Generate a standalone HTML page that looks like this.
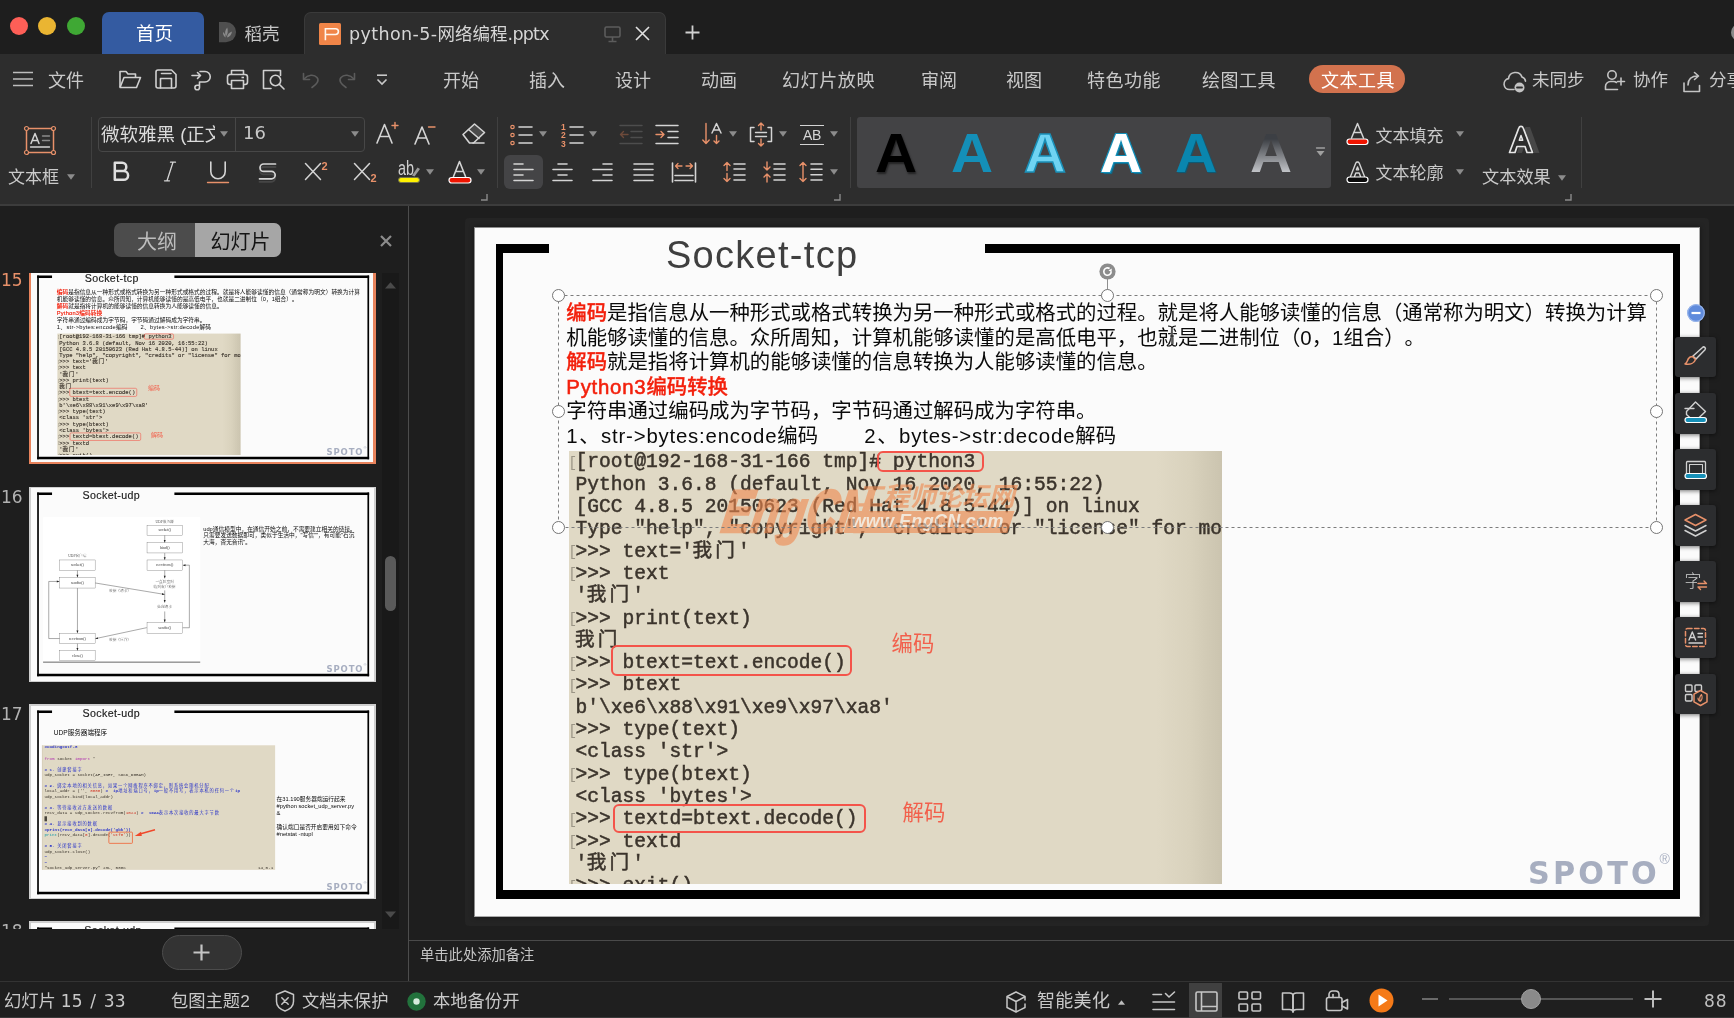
<!DOCTYPE html>
<html lang="zh-CN">
<head>
<meta charset="utf-8">
<title>python-5-网络编程.pptx</title>
<style>
*{box-sizing:border-box;margin:0;padding:0}
html,body{width:1734px;height:1018px;overflow:hidden;background:#1e1e1e}
body{position:relative;font-family:"Liberation Sans","Noto Sans CJK SC",sans-serif;color:#c9c9c9;font-size:18px;line-height:1}
.abs{position:absolute}
body>div{will-change:transform}
.t{position:absolute;white-space:nowrap;line-height:1}
svg{position:absolute;overflow:visible}
#titlebar{position:absolute;left:0;top:0;width:1734px;height:54px;background:#1e1e1e}
#menubar{position:absolute;left:0;top:54px;width:1734px;height:51px;background:#2d2d2d}
#ribbon{position:absolute;left:0;top:105px;width:1734px;height:99px;background:#2d2d2d}
#ribbonline{position:absolute;left:0;top:204px;width:1734px;height:2px;background:#3c3c3c}
#leftpanel{position:absolute;left:0;top:206px;width:408px;height:775px;background:#1e1e1e;overflow:hidden}
#vsplit{position:absolute;left:408px;top:206px;width:1px;height:775px;background:#4c4c4c}
#main{position:absolute;left:409px;top:206px;width:1325px;height:734px;background:#1e1e1e;overflow:hidden}
#notes{position:absolute;left:409px;top:939.500px;width:1325px;height:42px;background:#1e1e1e;border-top:1.300px solid #4a4a4a}
#status{position:absolute;left:0;top:981px;width:1734px;height:37px;background:#1f1f1f;border-top:1px solid #333;border-bottom:1.500px solid #3a3a3a}
.slide{position:absolute;width:1225px;height:689px;background:#fbfbfb;overflow:hidden;font-family:"Liberation Sans","Noto Sans CJK SC",sans-serif}
.code{font-family:"Liberation Mono","Noto Sans CJK SC",monospace;font-size:19.600px;line-height:22px;color:#3b342c;-webkit-text-stroke:.5px #3b342c;white-space:pre}
.th .ttl{color:#1c1c1c!important;-webkit-text-stroke:.6px #1c1c1c}
.th .body{transform:translateY(-10px)}
</style>
</head>
<body>
<div id="titlebar"><div class="abs" style="left:10px;top:17px;width:18px;height:18px;border-radius:50%;background:#fe5f57"></div>
<div class="abs" style="left:38px;top:17px;width:18px;height:18px;border-radius:50%;background:#eab532"></div>
<div class="abs" style="left:67px;top:17px;width:18px;height:18px;border-radius:50%;background:#3fa834"></div>
<div class="abs" style="left:102px;top:12px;width:102px;height:42px;border-radius:7px 7px 0 0;background:#345ba1"></div>
<div class="t" style="left:136px;top:25px;font-size:18.500px;color:#fff">首页</div>
<svg style="left:218.800px;top:22px" width="18" height="21" viewBox="0 0 18 21"><path d="M0 0H7A10 10 0 0 1 7 20.200H0Z" fill="#4f4f4f"/><path d="M8.200 5.500C5.800 8.500 5.500 11.500 7 14.500C9 11.500 9.200 8.500 8.200 5.500Z" fill="#8c8c8c"/><path d="M13 9.500C10 10.500 8.200 12.500 8 15.500C10.800 14.800 12.500 12.800 13 9.500Z" fill="#8c8c8c"/><path d="M4 10C3.800 12.500 4.800 14.500 6.600 15.500C6.500 13 5.600 11.300 4 10Z" fill="#8c8c8c"/></svg>
<div class="t" style="left:244.500px;top:25.700px;font-size:17.500px;color:#c6c6c6">稻壳</div>
<div class="abs" style="left:304px;top:12px;width:362px;height:42px;border-radius:7px 7px 0 0;background:#2d2d2d;border:1px solid #3a3a3a;border-bottom:none"></div>
<div class="abs" style="left:319.400px;top:23.200px;width:22px;height:22px;border-radius:1.500px;background:#f08548"></div>
<svg style="left:319.400px;top:23.200px" width="22" height="22" viewBox="0 0 22 22"><path d="M6.400 17.300V5.700H16.500a2.900 2.900 0 0 1 0 5.800H6.400" fill="none" stroke="#fff6ee" stroke-width="1.600"/></svg>
<div class="t" style="left:349px;top:25.500px;font-size:17.500px;color:#d6d6d6;font-family:'DejaVu Sans','Liberation Sans','Noto Sans CJK SC',sans-serif"><span style="letter-spacing:.4px">python-5-</span>网络编程<span style="letter-spacing:-.75px">.pptx</span></div>
<svg style="left:604px;top:26px" width="18" height="17" viewBox="0 0 18 17"><rect x="1" y="1" width="15" height="10" rx="1.5" fill="none" stroke="#5c5c5c" stroke-width="1.6"/><path d="M8.5 11V15.5M4.5 15.5H12.5" stroke="#5c5c5c" stroke-width="1.6" fill="none"/></svg>
<svg style="left:635px;top:26px" width="15" height="15" viewBox="0 0 15 15"><path d="M1 1L14 14M14 1L1 14" stroke="#e2e2e2" stroke-width="1.6" fill="none"/></svg>
<svg style="left:685px;top:25px" width="15" height="15" viewBox="0 0 15 15"><path d="M7.5 0.5V14.5M0.5 7.5H14.5" stroke="#d0d0d0" stroke-width="1.8" fill="none"/></svg>
<div class="abs" style="left:1730.800px;top:24px;width:17px;height:17px;border-radius:50%;background:#8a8a8a"></div>
</div>
<div id="menubar"><svg style="left:13px;top:16.500px" width="20" height="16" viewBox="0 0 20 16"><path d="M0 1.5H20M0 8H20M0 14.5H20" stroke="#bdbdbd" stroke-width="1.5"/></svg>
<div class="t" style="left:48px;top:17.700px;color:#cacaca">文件</div>
<!-- folder -->
<svg style="left:118px;top:15px" width="24" height="20" viewBox="0 0 24 20" fill="none" stroke="#d0d0d0" stroke-width="1.6" stroke-linejoin="round"><path d="M2 18V2.5h6l2 2.5h7.5v3.5"/><path d="M2 18.5L6 8.5h16.5L18.5 18.5Z"/></svg>
<!-- save -->
<svg style="left:155px;top:15px" width="22" height="20" viewBox="0 0 22 20" fill="none" stroke="#d0d0d0" stroke-width="1.600" stroke-linejoin="round" stroke-linecap="round"><path d="M3 1H16.500L21 5.500V17a2 2 0 0 1-2 2H3a2 2 0 0 1-2-2V3a2 2 0 0 1 2-2Z"/><path d="M6.500 4.500H16"/><path d="M5.500 19V9.500h11V19"/></svg>
<!-- export -->
<svg style="left:191px;top:15px" width="22" height="22" viewBox="0 0 22 22" fill="none" stroke="#d0d0d0" stroke-width="1.6" stroke-linecap="round" stroke-linejoin="round"><path d="M1 6.5h8M6.5 3.5l3 3l-3 3"/><path d="M9 2.5h5a5 5 0 0 1 0 10.5h-5.5v5.5a2.3 2.3 0 1 1-2.300-2.300h2"/></svg>
<!-- print -->
<svg style="left:226px;top:14.500px" width="23" height="21" viewBox="0 0 23 21" fill="none" stroke="#d0d0d0" stroke-width="1.6" stroke-linejoin="round"><path d="M5.500 5.500V1.500h12v4"/><rect x="1.500" y="5.500" width="20" height="10" rx="2.500"/><rect x="5.500" y="11.500" width="12" height="8" fill="#2d2d2d"/><path d="M15.500 8.500h2.500"/></svg>
<!-- preview -->
<svg style="left:262px;top:14.500px" width="24" height="22" viewBox="0 0 24 22" fill="none" stroke="#d0d0d0" stroke-width="1.6" stroke-linejoin="round" stroke-linecap="round"><path d="M9 19.500H1.500V1.500h17v5"/><circle cx="13.500" cy="11.500" r="5.200" fill="#2d2d2d"/><path d="M17.500 15.500l4.500 4.500"/></svg>
<!-- undo redo -->
<svg style="left:302px;top:17.500px" width="19" height="17" viewBox="0 0 19 17" fill="none" stroke="#5b5b5b" stroke-width="1.600" stroke-linecap="round" stroke-linejoin="round"><path d="M1.500 1.500V7.500H7.500"/><path d="M2 7C6 2.500 12 2 15 5.500C17.500 8.500 15 12 10 15.500"/></svg>
<svg style="left:337px;top:17.500px" width="19" height="17" viewBox="0 0 19 17" fill="none" stroke="#5b5b5b" stroke-width="1.600" stroke-linecap="round" stroke-linejoin="round"><path d="M17.500 1.500V7.500H11.500"/><path d="M17 7C13 2.500 7 2 4 5.500C1.500 8.500 4 12 9 15.500"/></svg>
<svg style="left:375.500px;top:20px" width="12" height="12" viewBox="0 0 12 12" fill="none" stroke="#c8c8c8" stroke-width="1.6"><path d="M1 1.200h10"/><path d="M1.500 5.500l4.500 4.500l4.500-4.500"/></svg>
<div class="t" style="left:443px;top:17.700px">开始</div>
<div class="t" style="left:529px;top:17.700px">插入</div>
<div class="t" style="left:615px;top:17.700px">设计</div>
<div class="t" style="left:701px;top:17.700px">动画</div>
<div class="t" style="left:782px;top:17.700px;letter-spacing:0.6px">幻灯片放映</div>
<div class="t" style="left:921px;top:17.700px">审阅</div>
<div class="t" style="left:1006px;top:17.700px">视图</div>
<div class="t" style="left:1087px;top:17.700px;letter-spacing:0.5px">特色功能</div>
<div class="t" style="left:1202px;top:17.700px;letter-spacing:0.5px">绘图工具</div>
<div class="abs" style="left:1309px;top:11px;width:96px;height:28px;border-radius:14px;background:#d2724e"></div>
<div class="t" style="left:1321px;top:17.700px;color:#fff;letter-spacing:0.5px">文本工具</div>
<!-- cloud -->
<svg style="left:1502px;top:15px" width="26" height="24" viewBox="0 0 26 24" fill="none" stroke="#c4c4c4" stroke-width="1.6" stroke-linecap="round"><path d="M12 20.500H7.500a5.500 5.500 0 0 1-1-10.900a7 7 0 0 1 13.500-1.500a5 5 0 0 1 3.500 4"/><circle cx="17.500" cy="18.500" r="5" fill="#c4c4c4" stroke="none"/><path d="M15 18.500h5" stroke="#2d2d2d" stroke-width="1.800"/></svg>
<div class="t" style="left:1532px;top:18.400px;font-size:17.500px">未同步</div>
<svg style="left:1604px;top:15px" width="22" height="22" viewBox="0 0 22 22" fill="none" stroke="#c4c4c4" stroke-width="1.600" stroke-linecap="round"><circle cx="8" cy="6" r="4.200"/><path d="M1.500 20.500v-3a5 5 0 0 1 5-5h3a5 5 0 0 1 3 1M1.500 20.500h12"/><path d="M17 9v7M13.500 12.500h7"/></svg>
<div class="t" style="left:1633px;top:18.400px;font-size:17.500px">协作</div>
<svg style="left:1682px;top:17px" width="20" height="22" viewBox="0 0 20 22" fill="none" stroke="#c4c4c4" stroke-width="1.600" stroke-linecap="round" stroke-linejoin="round"><path d="M2 12v8.500h15.500v-6"/><path d="M6 14c0-6 4-9 10-9M12.500 1.500l4 3.500l-4 3.500"/></svg>
<div class="t" style="left:1709px;top:18.400px;font-size:17.500px">分享</div>
</div>
<div id="ribbon"><svg style="left:24px;top:21px" width="32" height="29" viewBox="0 0 32 29" fill="none" stroke-linecap="round" stroke-linejoin="round" ><rect x="2.5" y="2.500" width="27" height="24" stroke="#e8916a" stroke-width="1.500"/>
<circle cx="2.500" cy="2.500" r="2" fill="#2d2d2d" stroke="#e8916a" stroke-width="1.200"/><circle cx="29.500" cy="2.500" r="2" fill="#2d2d2d" stroke="#e8916a" stroke-width="1.200"/><circle cx="2.500" cy="26.500" r="2" fill="#2d2d2d" stroke="#e8916a" stroke-width="1.200"/><circle cx="29.500" cy="26.500" r="2" fill="#2d2d2d" stroke="#e8916a" stroke-width="1.200"/>
<path d="M7 17.500L11 7.500L15 17.500M8.500 14.500H13.500" stroke="#d4d4d4" stroke-width="1.500"/><path d="M18.500 10H25.500M18.500 14.500H25.500" stroke="#8a8a8a" stroke-width="1.400"/><path d="M6.500 21H25.500" stroke="#d4d4d4" stroke-width="1.400"/></svg>
<div class="t" style="left:8px;top:64px;font-size:17px;color:#cacaca">文本框</div>
<svg style="left:67px;top:69px" width="8" height="6" viewBox="0 0 8 6"><path d="M0 0.3H8L4 5.7Z" fill="#8c8c8c"/></svg>
<div class="abs" style="left:91px;top:12px;width:1px;height:71px;background:#404040"></div>
<div class="abs" style="left:98px;top:12px;width:267px;height:35px;border:1px solid #474747;border-radius:4px"></div>
<div class="abs" style="left:235px;top:12px;width:1px;height:35px;background:#474747"></div>
<div class="t" style="left:101px;top:19px;font-size:18.500px;width:114px;overflow:hidden;color:#dcdcdc;height:24px;line-height:22px">微软雅黑 (正文)</div>
<svg style="left:220px;top:26px" width="8" height="6" viewBox="0 0 8 6"><path d="M0 0.3H8L4 5.7Z" fill="#8c8c8c"/></svg>
<div class="t" style="left:243px;top:19px;font-size:18px;color:#c8c8c8;font-family:'DejaVu Sans','Liberation Sans',sans-serif">16</div>
<svg style="left:351px;top:26px" width="8" height="6" viewBox="0 0 8 6"><path d="M0 0.3H8L4 5.7Z" fill="#8c8c8c"/></svg>
<svg style="left:376px;top:17px" width="24" height="22" viewBox="0 0 24 22" fill="none" stroke-linecap="round" stroke-linejoin="round" ><path d="M1 21L8.500 2.500L16 21M4 14.500H13" stroke="#d4d4d4" stroke-width="1.600"/><path d="M16 3.500H22M19 0.500V6.500" stroke="#e8916a" stroke-width="1.400"/></svg>
<svg style="left:414px;top:19px" width="24" height="22" viewBox="0 0 24 22" fill="none" stroke-linecap="round" stroke-linejoin="round" ><path d="M1 20L8 3L15 20M3.700 14H12.300" stroke="#d4d4d4" stroke-width="1.600"/><path d="M14.500 3H21" stroke="#e8916a" stroke-width="1.400"/></svg>
<svg style="left:462px;top:18px" width="24" height="21" viewBox="0 0 24 21" fill="none" stroke-linecap="round" stroke-linejoin="round" ><path d="M6.500 6.500L12.500 1L22.500 9.500L17 15.500Z" fill="#4a4a4a" stroke="none"/><path d="M1 11.500L12.500 1L22.500 9.500L11.500 20H7.500Z" stroke="#d4d4d4" stroke-width="1.600"/><path d="M6.500 6.500L17 15.500" stroke="#d4d4d4" stroke-width="1.600"/><path d="M11 20H22" stroke="#d4d4d4" stroke-width="1.600"/></svg>
<svg style="left:113px;top:56px" width="18" height="22" viewBox="0 0 18 22" fill="none" stroke-linecap="round" stroke-linejoin="round" ><path d="M1.800 1.800H9.200a4 4 0 0 1 0 8.200H1.800M9.500 10H10.700a4.300 4.300 0 0 1 0 8.800H1.800V1.800" stroke="#dedede" stroke-width="2.500"/></svg>
<svg style="left:164px;top:56px" width="13" height="21" viewBox="0 0 13 21" fill="none" stroke-linecap="round" stroke-linejoin="round" ><path d="M6.500 1.200H11.500M0.500 19.800H5.500M9 1.200L3 19.800" stroke="#d4d4d4" stroke-width="1.300"/></svg>
<svg style="left:207px;top:56px" width="22" height="23" viewBox="0 0 22 23" fill="none" stroke-linecap="round" stroke-linejoin="round" ><path d="M3.800 1V10.500a7.200 7.200 0 0 0 14.400 0V1" stroke="#d4d4d4" stroke-width="1.600"/><path d="M0.500 21.500H21.500" stroke="#e8916a" stroke-width="1.400"/></svg>
<svg style="left:258px;top:57px" width="20" height="22" viewBox="0 0 20 22" fill="none" stroke-linecap="round" stroke-linejoin="round" ><path d="M17.500 5H5.700a3.700 3.700 0 0 0 0 7.400H13.500a3.700 3.700 0 0 1 0 7.400H1.500" stroke="#454545" stroke-width="1.800"/><path d="M17.500 2H5.700a3.700 3.700 0 0 0 0 7.400H13.500a3.700 3.700 0 0 1 0 7.400H1.500" stroke="#d4d4d4" stroke-width="1.700"/></svg>
<svg style="left:304px;top:56px" width="18" height="20" viewBox="0 0 18 20" fill="none" stroke-linecap="round" stroke-linejoin="round" ><path d="M1.500 2.500L16.500 18.500M16.500 2.500L1.500 18.500" stroke="#d4d4d4" stroke-width="1.500"/></svg>
<div class="t" style="left:321.500px;top:56px;font-size:11px;font-weight:bold;color:#e8916a">2</div>
<svg style="left:353px;top:56px" width="18" height="20" viewBox="0 0 18 20" fill="none" stroke-linecap="round" stroke-linejoin="round" ><path d="M1.500 2.500L16.500 18.500M16.500 2.500L1.500 18.500" stroke="#d4d4d4" stroke-width="1.500"/></svg>
<div class="t" style="left:370.500px;top:68px;font-size:11px;font-weight:bold;color:#e8916a">2</div>
<div class="t" style="left:398px;top:53px;font-size:20px;color:#cfcfcf;transform:scaleX(.72);transform-origin:0 0">ab</div>
<svg style="left:411px;top:61px" width="10" height="11" viewBox="0 0 10 11" fill="none" stroke-linecap="round" stroke-linejoin="round" ><path d="M1 9.500L6.500 1.500L9 3L3.500 10.500Z" fill="#9a9a9a" stroke="none"/></svg>
<div class="abs" style="left:397.500px;top:71.500px;width:22.500px;height:6.500px;border-radius:3px;background:#fff200;border:1px solid #77774a"></div>
<svg style="left:426px;top:64px" width="8" height="6" viewBox="0 0 8 6"><path d="M0 0.3H8L4 5.7Z" fill="#8c8c8c"/></svg>
<svg style="left:448px;top:55px" width="24" height="24" viewBox="0 0 24 24" fill="none" stroke-linecap="round" stroke-linejoin="round" ><path d="M5.500 16.500L11.500 1.500L17.500 16.500M7.500 11.500H15.500" stroke="#d4d4d4" stroke-width="1.600"/><rect x="1" y="17.500" width="22" height="5.500" rx="2.700" fill="#f01400" stroke="#fff" stroke-width="1.200"/></svg>
<svg style="left:477px;top:64px" width="8" height="6" viewBox="0 0 8 6"><path d="M0 0.3H8L4 5.7Z" fill="#8c8c8c"/></svg>
<svg style="left:481px;top:89px" width="7" height="7" viewBox="0 0 7 7"><path d="M6 0V6H0" fill="none" stroke="#8a8a8a" stroke-width="1.4"/></svg>
<div class="abs" style="left:497px;top:12px;width:1px;height:71px;background:#404040"></div>
<svg style="left:510px;top:19px" width="24" height="22" viewBox="0 0 24 22" fill="none" stroke-linecap="round" stroke-linejoin="round" ><circle cx="2.500" cy="3" r="1.700" stroke="#e8916a" stroke-width="1.200"/><circle cx="2.500" cy="11" r="1.700" stroke="#e8916a" stroke-width="1.200"/><circle cx="2.500" cy="19" r="1.700" stroke="#e8916a" stroke-width="1.200"/><path d="M9 3H22M9 11H22M9 19H22" stroke="#d4d4d4" stroke-width="1.600"/></svg>
<svg style="left:539px;top:26px" width="8" height="6" viewBox="0 0 8 6"><path d="M0 0.3H8L4 5.7Z" fill="#8c8c8c"/></svg>
<div class="t" style="left:561px;top:18px;font-size:8.500px;line-height:8.300px;font-weight:bold;color:#e8916a;white-space:pre">1
2
3</div>
<svg style="left:569px;top:19px" width="16" height="22" viewBox="0 0 16 22" fill="none" stroke-linecap="round" stroke-linejoin="round" ><path d="M1 3H14M1 11H14M1 19H14" stroke="#d4d4d4" stroke-width="1.600"/></svg>
<svg style="left:589px;top:26px" width="8" height="6" viewBox="0 0 8 6"><path d="M0 0.3H8L4 5.7Z" fill="#8c8c8c"/></svg>
<svg style="left:619px;top:19px" width="24" height="22" viewBox="0 0 24 22" fill="none" stroke-linecap="round" stroke-linejoin="round" ><path d="M1 1.500H23M12 7.500H23M12 13.500H23M1 19.500H23" stroke="#4d4d4d" stroke-width="1.500"/><path d="M9 10.500H1.500M4.500 7.500L1.500 10.500L4.500 13.500" stroke="#6d4a3a" stroke-width="1.400"/></svg>
<svg style="left:655px;top:19px" width="24" height="22" viewBox="0 0 24 22" fill="none" stroke-linecap="round" stroke-linejoin="round" ><path d="M1 1.500H23M13 7.500H23M13 13.500H23M1 19.500H23" stroke="#d4d4d4" stroke-width="1.500"/><path d="M1 10.500H9M6 7.500L9 10.500L6 13.500" stroke="#e8916a" stroke-width="1.400"/></svg>
<svg style="left:702px;top:17px" width="21" height="24" viewBox="0 0 21 24" fill="none" stroke-linecap="round" stroke-linejoin="round" ><path d="M4 1.500V21.500M0.800 18L4 21.500L7.200 18" stroke="#e8916a" stroke-width="1.400"/><path d="M10 11L14.500 1.500L19 11M11.500 8H17.500" stroke="#d4d4d4" stroke-width="1.500"/><path d="M14.500 13.500V21.500M12 19L14.500 21.500L17 19" stroke="#e8916a" stroke-width="1.400"/></svg>
<svg style="left:729px;top:26px" width="8" height="6" viewBox="0 0 8 6"><path d="M0 0.3H8L4 5.7Z" fill="#8c8c8c"/></svg>
<svg style="left:749px;top:17px" width="24" height="25" viewBox="0 0 24 25" fill="none" stroke-linecap="round" stroke-linejoin="round" ><path d="M5 5.500H1.500V19.500H5M19 5.500H22.500V19.500H19" stroke="#d4d4d4" stroke-width="1.500"/><path d="M6.500 10.500H17.500M6.500 14.500H17.500" stroke="#d4d4d4" stroke-width="1.400"/><path d="M12 1V8M9.500 3.500L12 1L14.500 3.500M12 17V24M9.500 21.500L12 24L14.500 21.500" stroke="#e8916a" stroke-width="1.400"/></svg>
<svg style="left:779px;top:26px" width="8" height="6" viewBox="0 0 8 6"><path d="M0 0.3H8L4 5.7Z" fill="#8c8c8c"/></svg>
<div class="abs" style="left:800px;top:20px;width:24px;height:1.200px;background:#d4d4d4"></div>
<div class="abs" style="left:800px;top:38.500px;width:24px;height:1.200px;background:#d4d4d4"></div>
<div class="t" style="left:803px;top:23px;font-size:14px;color:#d4d4d4;letter-spacing:-0.300px">AB</div>
<svg style="left:830px;top:26px" width="8" height="6" viewBox="0 0 8 6"><path d="M0 0.3H8L4 5.7Z" fill="#8c8c8c"/></svg>
<div class="abs" style="left:504px;top:50px;width:39px;height:34px;border-radius:6px;background:#444446"></div>
<svg style="left:513px;top:57px" width="22" height="20" viewBox="0 0 22 20" fill="none" stroke-linecap="round" stroke-linejoin="round" ><path d="M1 2H10M1 7.5H20M1 13H10M1 18.5H20" stroke="#d4d4d4" stroke-width="1.600"/></svg>
<svg style="left:552px;top:57px" width="22" height="20" viewBox="0 0 22 20" fill="none" stroke-linecap="round" stroke-linejoin="round" ><path d="M6 2H15M1 7.5H20M6 13H15M1 18.5H20" stroke="#d4d4d4" stroke-width="1.600"/></svg>
<svg style="left:592px;top:57px" width="22" height="20" viewBox="0 0 22 20" fill="none" stroke-linecap="round" stroke-linejoin="round" ><path d="M11 2H20M1 7.5H20M11 13H20M1 18.5H20" stroke="#d4d4d4" stroke-width="1.600"/></svg>
<svg style="left:633px;top:57px" width="22" height="20" viewBox="0 0 22 20" fill="none" stroke-linecap="round" stroke-linejoin="round" ><path d="M1 2H20M1 7.5H20M1 13H20M1 18.5H20" stroke="#d4d4d4" stroke-width="1.600"/></svg>
<svg style="left:671px;top:57px" width="26" height="21" viewBox="0 0 26 21" fill="none" stroke-linecap="round" stroke-linejoin="round" ><path d="M1.500 1V20M24.500 1V20M4 13.500H22M4 18.500H22" stroke="#d4d4d4" stroke-width="1.600"/><path d="M4.500 4H11M7 1.500L4.500 4L7 6.500M21.500 4H15M19 1.500L21.500 4L19 6.500" stroke="#e8916a" stroke-width="1.300"/></svg>
<svg style="left:723px;top:56px" width="23" height="22" viewBox="0 0 23 22" fill="none" stroke-linecap="round" stroke-linejoin="round" ><path d="M4 1.500V9.500M1 4.500L4 1.500L7 4.500M4 12.500V20.500M1 17.500L4 20.500L7 17.500" stroke="#e8916a" stroke-width="1.400"/><path d="M11 3H22M11 8H22M11 14H22M11 19H22" stroke="#d4d4d4" stroke-width="1.600"/></svg>
<svg style="left:763px;top:56px" width="23" height="22" viewBox="0 0 23 22" fill="none" stroke-linecap="round" stroke-linejoin="round" ><path d="M4 1V9M1 6L4 9L7 6M4 21V13M1 16L4 13L7 16" stroke="#e8916a" stroke-width="1.400"/><path d="M11 3H22M11 8H22M11 14H22M11 19H22" stroke="#d4d4d4" stroke-width="1.600"/></svg>
<svg style="left:799px;top:56px" width="24" height="22" viewBox="0 0 24 22" fill="none" stroke-linecap="round" stroke-linejoin="round" ><path d="M4 1.500V20.500M1 4.500L4 1.500L7 4.500M1 17.500L4 20.500L7 17.500" stroke="#e8916a" stroke-width="1.400"/><path d="M12 3H23M12 8.300H23M12 13.700H23M12 19H23" stroke="#d4d4d4" stroke-width="1.600"/></svg>
<svg style="left:830px;top:64px" width="8" height="6" viewBox="0 0 8 6"><path d="M0 0.3H8L4 5.7Z" fill="#8c8c8c"/></svg>
<svg style="left:834px;top:89px" width="7" height="7" viewBox="0 0 7 7"><path d="M6 0V6H0" fill="none" stroke="#8a8a8a" stroke-width="1.4"/></svg>
<div class="abs" style="left:850px;top:12px;width:1px;height:71px;background:#404040"></div>
<div class="abs" style="left:857px;top:12px;width:474px;height:71px;border-radius:3px;background:#434345"></div>
<div class="t" style="left:875px;top:20px;font-family:'Liberation Sans',sans-serif;font-weight:bold;font-size:56px;transform:scaleX(1.04);transform-origin:0 0;color:#000;text-shadow:1px 2px 2px rgba(0,0,0,.5)">A</div>
<div class="t" style="left:951px;top:20px;font-family:'Liberation Sans',sans-serif;font-weight:bold;font-size:56px;transform:scaleX(1.04);transform-origin:0 0;color:#148fb8">A</div>
<div class="t" style="left:1024px;top:20px;font-family:'Liberation Sans',sans-serif;font-weight:bold;font-size:56px;transform:scaleX(1.04);transform-origin:0 0;color:#6fd3f2;-webkit-text-stroke:1.500px #1a90b8">A</div>
<div class="t" style="left:1100px;top:20px;font-family:'Liberation Sans',sans-serif;font-weight:bold;font-size:56px;transform:scaleX(1.04);transform-origin:0 0;color:#fff;text-shadow:1px 1px 0 #148fb8,-1px -1px 0 #148fb8,1px -1px 0 #148fb8,-1px 1px 0 #148fb8,2px 2px 1px #0b6e90">A</div>
<div class="t" style="left:1175px;top:20px;font-family:'Liberation Sans',sans-serif;font-weight:bold;font-size:56px;transform:scaleX(1.04);transform-origin:0 0;color:#0a86ae;text-shadow:1px 1px 1px #0a5c78">A</div>
<div class="t" style="left:1249.500px;top:20px;font-family:'Liberation Sans',sans-serif;font-weight:bold;font-size:56px;transform:scaleX(1.04);transform-origin:0 0;background:linear-gradient(#3c3f44 25%,#c4c6ca 85%);-webkit-background-clip:text;background-clip:text;color:transparent">A</div>
<svg style="left:1316px;top:42px" width="9" height="10" viewBox="0 0 9 10" fill="none" stroke-linecap="round" stroke-linejoin="round" ><path d="M0.500 1H8.500" stroke="#a0a0a0" stroke-width="1.300"/><path d="M0.500 4H8.500L4.500 9Z" fill="#a0a0a0"/></svg>
<svg style="left:1346px;top:17px" width="23" height="24" viewBox="0 0 23 24" fill="none" stroke-linecap="round" stroke-linejoin="round" ><path d="M5.500 16L11.500 1.500L17.500 16M8 10.500H15" stroke="#d4d4d4" stroke-width="1.500"/><rect x="1" y="17" width="21" height="5.500" rx="2.700" fill="#f01400" stroke="#fff" stroke-width="1.200"/></svg>
<div class="t" style="left:1375.500px;top:22.500px;font-size:17px;color:#cacaca">文本填充</div>
<svg style="left:1456px;top:26px" width="8" height="6" viewBox="0 0 8 6"><path d="M0 0.3H8L4 5.7Z" fill="#8c8c8c"/></svg>
<svg style="left:1346px;top:55px" width="23" height="24" viewBox="0 0 23 24" fill="none" stroke-linecap="round" stroke-linejoin="round" ><path d="M4.500 16.500L9.800 3a1.900 1.900 0 0 1 3.400 0L18.500 16.500M8.500 16.500L9.800 13H13.200L14.500 16.500" stroke="#d4d4d4" stroke-width="1.400"/><path d="M10.300 9.800L11.500 6.800L12.700 9.800Z" stroke="#d4d4d4" stroke-width="1.200"/><rect x="1" y="17" width="21" height="5.500" rx="2.700" fill="#0a0a0a" stroke="#fff" stroke-width="1.200"/></svg>
<div class="t" style="left:1375.500px;top:60px;font-size:17px;color:#cacaca">文本轮廓</div>
<svg style="left:1456px;top:64px" width="8" height="6" viewBox="0 0 8 6"><path d="M0 0.3H8L4 5.7Z" fill="#8c8c8c"/></svg>
<svg style="left:1508px;top:20px" width="33" height="29" viewBox="0 0 33 29" fill="none" stroke-linecap="round" stroke-linejoin="round" ><path d="M9 28L17.500 2H22L31.500 28H26L24 22H16L14 28Z" fill="#474747" stroke="none"/><path d="M1.500 27.500L10.800 3a2.300 2.300 0 0 1 4.400 0L24.500 27.500H19L17 21.500H9L7 27.500Z" fill="#2d2d2d" stroke="#e6e6e6" stroke-width="1.700"/><path d="M11.300 15.300L13 10.500L14.700 15.300Z" stroke="#e6e6e6" stroke-width="1.500" fill="#2d2d2d"/></svg>
<div class="t" style="left:1482px;top:64px;font-size:17.200px;color:#cacaca">文本效果</div>
<svg style="left:1558px;top:70px" width="8" height="6" viewBox="0 0 8 6"><path d="M0 0.3H8L4 5.7Z" fill="#8c8c8c"/></svg>
<svg style="left:1565px;top:89px" width="7" height="7" viewBox="0 0 7 7"><path d="M6 0V6H0" fill="none" stroke="#8a8a8a" stroke-width="1.4"/></svg>
<div class="abs" style="left:1581px;top:12px;width:1px;height:71px;background:#404040"></div></div>
<div id="ribbonline"></div>
<div id="leftpanel"><div class="abs" style="left:114.200px;top:16.8px;width:167px;height:34.600px;border-radius:7px;background:#4c4c4c;overflow:hidden"><div class="abs" style="left:81px;top:0;width:86px;height:35px;background:#a6a6a6"></div></div>
<div class="t" style="left:137px;top:26.200px;font-size:20px;color:#bdbdbd">大纲</div>
<div class="t" style="left:210.500px;top:26.200px;font-size:20px;color:#141414">幻灯片</div>
<svg style="left:380px;top:28.800px" width="12" height="12" viewBox="0 0 12 12"><path d="M1 1L11 11M11 1L1 11" stroke="#8c8c8c" stroke-width="2.200"/></svg>
<div class="abs" style="left:0;top:66.5px;width:400px;height:656px;overflow:hidden">
<div class="t" style="left:1px;top:-3.0px;font-size:17px;color:#e8916a;font-family:'DejaVu Sans','Liberation Sans',sans-serif;line-height:20px">15</div>
<div class="abs" style="left:28.700px;top:-3.3px;width:347.600px;height:194.8px;background:#e8835c"></div>
<div class="abs" style="left:30.700px;top:-1.5px;width:343.800px;height:192.500px;overflow:hidden;background:#d8d8d8"><div class="slide th" style="left:0;top:0;transform:scale(0.2806);transform-origin:0 0"><div class="abs" style="left:21.500px;top:15.500px;width:6.500px;height:655px;background:#000"></div>
<div class="abs" style="left:21.500px;top:15.500px;width:53.200px;height:9px;background:#000"></div>
<div class="abs" style="left:510.900px;top:15.500px;width:694.100px;height:9px;background:#000"></div>
<div class="abs" style="left:1198.500px;top:15.500px;width:6.500px;height:655px;background:#000"></div>
<div class="abs" style="left:21.500px;top:661.500px;width:1183.500px;height:9px;background:#000"></div>
<div class="t ttl" style="left:191.4px;top:5px;font-size:38px;color:#3f3f3f;letter-spacing:1.300px;line-height:44px">Socket-tcp</div>
<div class="t" style="left:1053px;top:630px;font-size:31.500px;font-weight:bold;color:#a7aec0;letter-spacing:3.300px;font-family:'DejaVu Sans','Liberation Sans',sans-serif;transform:scaleX(.96);transform-origin:0 0">SPOTO</div>
<div class="t" style="left:1185px;top:624px;font-size:14px;color:#a7aec0">®</div>
<div class="abs body" style="left:91.800px;top:73.300px;width:1100px;font-size:20.400px;line-height:24.500px;color:#0a0a0a;white-space:nowrap;text-spacing-trim:space-all">
<div><span style="color:#f3200c;font-weight:500;-webkit-text-stroke:.3px #f3200c">编码</span>是指信息从一种形式或格式转换为另一种形式或格式的过程。就是将人能够读懂的信息（通常称为明文）转换为计算</div>
<div>机能够读懂的信息。众所周知，计算机能够读懂的是高低电平，也就是二进制位（0，1组合）。</div>
<div><span style="color:#f3200c;font-weight:500;-webkit-text-stroke:.3px #f3200c">解码</span>就是指将计算机的能够读懂的信息转换为人能够读懂的信息。</div>
<div><span style="color:#f3200c;font-weight:500;-webkit-text-stroke:.3px #f3200c"><span style="-webkit-text-stroke:.55px #f3200c;letter-spacing:.75px">Python3</span>编码转换</span></div>
<div>字符串通过编码成为字节码，字节码通过解码成为字符串。</div>
<div style="position:relative"><span style="letter-spacing:1.500px">1、</span><span style="letter-spacing:.800px">str-&gt;bytes:encode</span>编码<span style="position:absolute;left:298px;top:0"><span style="letter-spacing:1.500px">2、</span><span style="letter-spacing:.800px">bytes-&gt;str:decode</span>解码</span></div>
</div>
<div class="abs" style="left:94.400px;top:222.500px;width:653px;height:433.700px;background:linear-gradient(90deg,#e0d9c5 0,#e0d9c5 90%,#d9d2bd 95%,#cbc4af 100%);overflow:hidden">
<div class="t" style="left:-0.500px;top:3.4px;font-size:14px;color:#9a9485;font-family:'Liberation Mono',monospace;line-height:18px">[</div>
<div class="t code" style="left:6.500px;top:0.9px">[root@192-168-31-166 tmp]# python3</div>
<div class="t code" style="left:6.500px;top:23.2px">Python 3.6.8 (default, Nov 16 2020, 16:55:22)</div>
<div class="t code" style="left:6.500px;top:45.5px">[GCC 4.8.5 20150623 (Red Hat 4.8.5-44)] on linux</div>
<div class="t code" style="left:6.500px;top:67.8px">Type "help", "copyright", "credits" or "license" for mo</div>
<div class="t" style="left:-0.500px;top:92.6px;font-size:14px;color:#9a9485;font-family:'Liberation Mono',monospace;line-height:18px">[</div>
<div class="t code" style="left:6.500px;top:90.1px">&gt;&gt;&gt; text='<span style="letter-spacing:3.200px;margin-left:-0.500px">我门</span>'</div>
<div class="t" style="left:-0.500px;top:114.9px;font-size:14px;color:#9a9485;font-family:'Liberation Mono',monospace;line-height:18px">[</div>
<div class="t code" style="left:6.500px;top:112.4px">&gt;&gt;&gt; text</div>
<div class="t code" style="left:6.500px;top:134.7px">'<span style="letter-spacing:3.200px;margin-left:-0.500px">我门</span>'</div>
<div class="t" style="left:-0.500px;top:159.5px;font-size:14px;color:#9a9485;font-family:'Liberation Mono',monospace;line-height:18px">[</div>
<div class="t code" style="left:6.500px;top:157.0px">&gt;&gt;&gt; print(text)</div>
<div class="t code" style="left:6.500px;top:179.3px"><span style="letter-spacing:3.200px;margin-left:-0.500px">我门</span></div>
<div class="t" style="left:-0.500px;top:204.1px;font-size:14px;color:#9a9485;font-family:'Liberation Mono',monospace;line-height:18px">[</div>
<div class="t code" style="left:6.500px;top:201.6px">&gt;&gt;&gt; btext=text.encode()</div>
<div class="t" style="left:-0.500px;top:226.4px;font-size:14px;color:#9a9485;font-family:'Liberation Mono',monospace;line-height:18px">[</div>
<div class="t code" style="left:6.500px;top:223.9px">&gt;&gt;&gt; btext</div>
<div class="t code" style="left:6.500px;top:246.2px">b'\xe6\x88\x91\xe9\x97\xa8'</div>
<div class="t" style="left:-0.500px;top:271.0px;font-size:14px;color:#9a9485;font-family:'Liberation Mono',monospace;line-height:18px">[</div>
<div class="t code" style="left:6.500px;top:268.5px">&gt;&gt;&gt; type(text)</div>
<div class="t code" style="left:6.500px;top:290.8px">&lt;class 'str'&gt;</div>
<div class="t" style="left:-0.500px;top:315.6px;font-size:14px;color:#9a9485;font-family:'Liberation Mono',monospace;line-height:18px">[</div>
<div class="t code" style="left:6.500px;top:313.1px">&gt;&gt;&gt; type(btext)</div>
<div class="t code" style="left:6.500px;top:335.4px">&lt;class 'bytes'&gt;</div>
<div class="t" style="left:-0.500px;top:360.2px;font-size:14px;color:#9a9485;font-family:'Liberation Mono',monospace;line-height:18px">[</div>
<div class="t code" style="left:6.500px;top:357.7px">&gt;&gt;&gt; textd=btext.decode()</div>
<div class="t" style="left:-0.500px;top:382.5px;font-size:14px;color:#9a9485;font-family:'Liberation Mono',monospace;line-height:18px">[</div>
<div class="t code" style="left:6.500px;top:380.0px">&gt;&gt;&gt; textd</div>
<div class="t code" style="left:6.500px;top:402.3px">'<span style="letter-spacing:3.200px;margin-left:-0.500px">我门</span>'</div>
<div class="t" style="left:-0.500px;top:427.1px;font-size:14px;color:#9a9485;font-family:'Liberation Mono',monospace;line-height:18px">[</div>
<div class="t code" style="left:6.500px;top:424.6px">&gt;&gt;&gt; exit()</div>
</div>
<div class="abs" style="left:402.600px;top:223.300px;width:106.500px;height:21.200px;border:2.600px solid #f4544a;border-radius:6px;border-width:2px"></div>
<div class="abs" style="left:136.500px;top:417.400px;width:241.400px;height:31px;border:2.600px solid #f4544a;border-radius:6px"></div>
<div class="abs" style="left:138.400px;top:576.300px;width:253.300px;height:28.400px;border:2.600px solid #f4544a;border-radius:6px"></div>
<div class="t" style="left:417px;top:403.500px;font-size:21.400px;color:#f2604c;line-height:24px">编码</div>
<div class="t" style="left:428px;top:572.500px;font-size:21.400px;color:#f2604c;line-height:24px">解码</div></div></div>
<div class="abs" style="left:28.700px;top:-3.0px;width:347.600px;height:194.800px;border:3px solid #e8835c;border-left-width:2.500px;border-bottom-width:2.500px"></div>
<div class="t" style="left:1px;top:214.3px;font-size:17px;color:#b2b2b2;font-family:'DejaVu Sans','Liberation Sans',sans-serif;line-height:20px">16</div>
<div class="abs" style="left:28.700px;top:214.0px;width:347.600px;height:195.6px;background:#cfcfcf"></div>
<div class="abs" style="left:30.700px;top:215.8px;width:343.800px;height:192.500px;overflow:hidden;background:#d8d8d8"><div class="slide th" style="left:0;top:0;transform:scale(0.2806);transform-origin:0 0"><div class="abs" style="left:21.500px;top:15.500px;width:6.500px;height:655px;background:#000"></div>
<div class="abs" style="left:21.500px;top:15.500px;width:53.200px;height:9px;background:#000"></div>
<div class="abs" style="left:510.900px;top:15.500px;width:694.100px;height:9px;background:#000"></div>
<div class="abs" style="left:1198.500px;top:15.500px;width:6.500px;height:655px;background:#000"></div>
<div class="abs" style="left:21.500px;top:661.500px;width:1183.500px;height:9px;background:#000"></div>
<div class="t ttl" style="left:183.5px;top:5px;font-size:38px;color:#3f3f3f;letter-spacing:1.300px;line-height:44px">Socket-udp</div>
<div class="t" style="left:1053px;top:630px;font-size:31.500px;font-weight:bold;color:#a7aec0;letter-spacing:3.300px;font-family:'DejaVu Sans','Liberation Sans',sans-serif;transform:scaleX(.96);transform-origin:0 0">SPOTO</div>
<div class="t" style="left:1185px;top:624px;font-size:14px;color:#a7aec0">®</div>
<div class="abs" style="left:42.600px;top:104px;width:560px;height:518px;background:#fff;border-bottom:3px solid #4a4a4a"></div>
<div class="abs" style="left:396.0px;top:110px;width:160px;text-align:center;font-family:'Liberation Serif','Noto Serif CJK SC',serif;font-size:13px;color:#555;line-height:18px;white-space:nowrap">UDP服务器</div>
<div class="abs" style="left:85.0px;top:234px;width:160px;text-align:center;font-family:'Liberation Serif','Noto Serif CJK SC',serif;font-size:13px;color:#555;line-height:18px;white-space:nowrap">UDP客户端</div>
<div class="abs" style="left:412.6px;top:132px;width:128.1px;height:37.0px;border:1.500px solid #444;background:#fff;font-family:'Liberation Serif',serif;font-size:14px;color:#333;text-align:center;line-height:34.0px">socket()</div>
<div class="abs" style="left:412.6px;top:194.3px;width:128.1px;height:37.7px;border:1.500px solid #444;background:#fff;font-family:'Liberation Serif',serif;font-size:14px;color:#333;text-align:center;line-height:34.7px">bind()</div>
<div class="abs" style="left:412.6px;top:256.4px;width:128.1px;height:37.8px;border:1.500px solid #444;background:#fff;font-family:'Liberation Serif',serif;font-size:14px;color:#333;text-align:center;line-height:34.8px">recvfrom()</div>
<div class="abs" style="left:412.6px;top:478.5px;width:128.1px;height:39.9px;border:1.500px solid #444;background:#fff;font-family:'Liberation Serif',serif;font-size:14px;color:#333;text-align:center;line-height:36.9px">sendto()</div>
<div class="abs" style="left:101.8px;top:256.4px;width:127.3px;height:37.8px;border:1.500px solid #444;background:#fff;font-family:'Liberation Serif',serif;font-size:14px;color:#333;text-align:center;line-height:34.8px">socket()</div>
<div class="abs" style="left:101.8px;top:318.6px;width:127.3px;height:38.5px;border:1.500px solid #444;background:#fff;font-family:'Liberation Serif',serif;font-size:14px;color:#333;text-align:center;line-height:35.5px">sendto()</div>
<div class="abs" style="left:101.8px;top:517px;width:127.3px;height:38.4px;border:1.500px solid #444;background:#fff;font-family:'Liberation Serif',serif;font-size:14px;color:#333;text-align:center;line-height:35.4px">recvfrom()</div>
<div class="abs" style="left:101.8px;top:579.1px;width:127.3px;height:37.0px;border:1.500px solid #444;background:#fff;font-family:'Liberation Serif',serif;font-size:14px;color:#333;text-align:center;line-height:34.0px">close()</div>
<div class="abs" style="left:396.0px;top:324px;width:160px;text-align:center;font-family:'Liberation Serif','Noto Serif CJK SC',serif;font-size:13px;color:#555;line-height:18px;white-space:nowrap">一直阻塞到</div>
<div class="abs" style="left:396.0px;top:344.4px;width:160px;text-align:center;font-family:'Liberation Serif','Noto Serif CJK SC',serif;font-size:13px;color:#555;line-height:18px;white-space:nowrap">收到客户数据</div>
<div class="abs" style="left:396.0px;top:414.7px;width:160px;text-align:center;font-family:'Liberation Serif','Noto Serif CJK SC',serif;font-size:13px;color:#555;line-height:18px;white-space:nowrap">处理请求</div>
<div class="abs" style="left:237.0px;top:357.8px;width:160px;text-align:center;font-family:'Liberation Serif','Noto Serif CJK SC',serif;font-size:13px;color:#555;line-height:18px;white-space:nowrap">数据（请求）</div>
<div class="abs" style="left:237.0px;top:531.7px;width:160px;text-align:center;font-family:'Liberation Serif','Noto Serif CJK SC',serif;font-size:13px;color:#555;line-height:18px;white-space:nowrap">数据（应答）</div>
<svg style="left:0;top:0" width="1225" height="689" viewBox="0 0 1225 689"><path d="M476.6 169.0L476.6 194.0" fill="none" stroke="#333" stroke-width="1.500"/><path d="M476.6 194.0L473.1 185.0L480.1 185.0Z" fill="#222" stroke="none"/><path d="M476.6 232.0L476.6 256.0" fill="none" stroke="#333" stroke-width="1.500"/><path d="M476.6 256.0L473.1 247.0L480.1 247.0Z" fill="#222" stroke="none"/><path d="M476.6 294.0L476.6 322.0" fill="none" stroke="#333" stroke-width="1.500"/><path d="M476.6 322.0L473.1 313.0L480.1 313.0Z" fill="#222" stroke="none"/><path d="M476.6 365.0L476.6 408.0" fill="none" stroke="#333" stroke-width="1.500"/><path d="M476.6 408.0L473.1 399.0L480.1 399.0Z" fill="#222" stroke="none"/><path d="M476.6 440.0L476.6 478.0" fill="none" stroke="#333" stroke-width="1.500"/><path d="M476.6 478.0L473.1 469.0L480.1 469.0Z" fill="#222" stroke="none"/><path d="M165.5 294.0L165.5 318.0" fill="none" stroke="#333" stroke-width="1.500"/><path d="M165.5 318.0L162.0 309.0L169.0 309.0Z" fill="#222" stroke="none"/><path d="M165.5 357.0L165.5 517.0" fill="none" stroke="#333" stroke-width="1.500"/><path d="M165.5 517.0L162.0 508.0L169.0 508.0Z" fill="#222" stroke="none"/><path d="M165.5 555.0L165.5 579.0" fill="none" stroke="#333" stroke-width="1.500"/><path d="M165.5 579.0L162.0 570.0L169.0 570.0Z" fill="#222" stroke="none"/><path d="M229.0 338.5L476.0 379.3" fill="none" stroke="#333" stroke-width="1.500"/><path d="M476.0 379.3L466.5 381.3L467.7 374.4Z" fill="#222" stroke="none"/><path d="M412.6 497.7L229.5 536.9" fill="none" stroke="#333" stroke-width="1.500"/><path d="M229.5 536.9L237.6 531.6L239.0 538.4Z" fill="#222" stroke="none"/><path d="M101.8 536.5L63.3 536.5L63.3 333.0L101.0 333.0" fill="none" stroke="#333" stroke-width="1.500"/><path d="M101.0 333.0L92.0 336.5L92.0 329.5Z" fill="#222" stroke="none"/><path d="M540.7 498.0L564.4 498.0L564.4 275.0L541.5 275.0" fill="none" stroke="#333" stroke-width="1.500"/><path d="M541.5 275.0L550.5 271.5L550.5 278.5Z" fill="#222" stroke="none"/></svg>
<div class="abs" style="left:613.900px;top:134.500px;font-size:20.400px;line-height:23.400px;color:#0a0a0a;white-space:nowrap;text-spacing-trim:space-all">
<div>udp通信模型中，在通信开始之前，不需要建立相关的链接。</div><div>只需要发送数据即可，类似于生活中，"写信""，有可能"石沉</div><div>大海，杳无音讯"。</div></div></div></div>
<div class="t" style="left:1px;top:431.5px;font-size:17px;color:#b2b2b2;font-family:'DejaVu Sans','Liberation Sans',sans-serif;line-height:20px">17</div>
<div class="abs" style="left:28.700px;top:431.2px;width:347.600px;height:195.6px;background:#cfcfcf"></div>
<div class="abs" style="left:30.700px;top:433.0px;width:343.800px;height:192.500px;overflow:hidden;background:#d8d8d8"><div class="slide th" style="left:0;top:0;transform:scale(0.2806);transform-origin:0 0"><div class="abs" style="left:21.500px;top:15.500px;width:6.500px;height:655px;background:#000"></div>
<div class="abs" style="left:21.500px;top:15.500px;width:53.200px;height:9px;background:#000"></div>
<div class="abs" style="left:510.900px;top:15.500px;width:694.100px;height:9px;background:#000"></div>
<div class="abs" style="left:1198.500px;top:15.500px;width:6.500px;height:655px;background:#000"></div>
<div class="abs" style="left:21.500px;top:661.500px;width:1183.500px;height:9px;background:#000"></div>
<div class="t ttl" style="left:183.5px;top:5px;font-size:38px;color:#3f3f3f;letter-spacing:1.300px;line-height:44px">Socket-udp</div>
<div class="t" style="left:1053px;top:630px;font-size:31.500px;font-weight:bold;color:#a7aec0;letter-spacing:3.300px;font-family:'DejaVu Sans','Liberation Sans',sans-serif;transform:scaleX(.96);transform-origin:0 0">SPOTO</div>
<div class="t" style="left:1185px;top:624px;font-size:14px;color:#a7aec0">®</div>
<div class="t" style="left:81px;top:82px;font-size:23.500px;color:#0a0a0a;line-height:28px">UDP服务器端程序</div>
<div class="abs" style="left:38.900px;top:140px;width:831px;height:444px;background:#e0d9c5;overflow:hidden;border-left:2px solid #cfc8b2">
<div class="t" style="left:7px;top:-1.6px;font-family:'Liberation Mono','Noto Sans CJK SC',monospace;font-size:15.100px;line-height:18px;color:#3a342c;white-space:pre"><span style="color:#2b35c8;font-weight:bold">#coding=utf-8</span></div>
<div class="t" style="left:7px;top:37.5px;font-family:'Liberation Mono','Noto Sans CJK SC',monospace;font-size:15.100px;line-height:18px;color:#3a342c;white-space:pre"><span style="color:#b030b0">from</span> socket <span style="color:#b030b0">import</span> *</div>
<div class="t" style="left:7px;top:76.6px;font-family:'Liberation Mono','Noto Sans CJK SC',monospace;font-size:15.100px;line-height:18px;color:#3a342c;white-space:pre"><span style="color:#2b35c8;font-weight:bold"># 1. <span style="letter-spacing:3px;font-weight:normal">创建套接字</span></span></div>
<div class="t" style="left:7px;top:96.2px;font-family:'Liberation Mono','Noto Sans CJK SC',monospace;font-size:15.100px;line-height:18px;color:#3a342c;white-space:pre">udp_socket = socket(AF_INET, SOCK_DGRAM)</div>
<div class="t" style="left:7px;top:135.2px;font-family:'Liberation Mono','Noto Sans CJK SC',monospace;font-size:15.100px;line-height:18px;color:#3a342c;white-space:pre"><span style="color:#2b35c8;font-weight:bold"># 2. <span style="letter-spacing:3px;font-weight:normal">绑定本地的相关信息，如果一个网络程序不绑定，则系统会随机分配</span></span></div>
<div class="t" style="left:7px;top:154.8px;font-family:'Liberation Mono','Noto Sans CJK SC',monospace;font-size:15.100px;line-height:18px;color:#3a342c;white-space:pre">local_addr = ('', <span style="color:#d03020">8888</span>) <span style="color:#2b35c8;font-weight:bold">#  ip<span style="letter-spacing:3px;font-weight:normal">地址和端口号，</span>ip<span style="letter-spacing:3px;font-weight:normal">一般不用写，表示本机的任何一个</span>ip</span></div>
<div class="t" style="left:7px;top:174.4px;font-family:'Liberation Mono','Noto Sans CJK SC',monospace;font-size:15.100px;line-height:18px;color:#3a342c;white-space:pre">udp_socket.bind(local_addr)</div>
<div class="t" style="left:7px;top:213.5px;font-family:'Liberation Mono','Noto Sans CJK SC',monospace;font-size:15.100px;line-height:18px;color:#3a342c;white-space:pre"><span style="color:#2b35c8;font-weight:bold"># 3. <span style="letter-spacing:3px;font-weight:normal">等待接收对方发送的数据</span></span></div>
<div class="t" style="left:7px;top:233.0px;font-family:'Liberation Mono','Noto Sans CJK SC',monospace;font-size:15.100px;line-height:18px;color:#3a342c;white-space:pre">recv_data = udp_socket.recvfrom(<span style="color:#d03020">1024</span>) <span style="color:#2b35c8;font-weight:bold">#  1024<span style="letter-spacing:3px;font-weight:normal">表示本次接收的最大字节数</span></span></div>
<div class="t" style="left:7px;top:252.6px;font-family:'Liberation Mono','Noto Sans CJK SC',monospace;font-size:15.100px;line-height:18px;color:#3a342c;white-space:pre"><span style="background:#4a463c">&nbsp;</span></div>
<div class="t" style="left:7px;top:272.1px;font-family:'Liberation Mono','Noto Sans CJK SC',monospace;font-size:15.100px;line-height:18px;color:#3a342c;white-space:pre"><span style="color:#2b35c8;font-weight:bold"># 4. <span style="letter-spacing:3px;font-weight:normal">显示接收到的数据</span></span></div>
<div class="t" style="left:7px;top:291.6px;font-family:'Liberation Mono','Noto Sans CJK SC',monospace;font-size:15.100px;line-height:18px;color:#3a342c;white-space:pre"><span style="color:#2b35c8;font-weight:bold">#print(recv_data[0].decode('gbk'))</span></div>
<div class="t" style="left:7px;top:311.2px;font-family:'Liberation Mono','Noto Sans CJK SC',monospace;font-size:15.100px;line-height:18px;color:#3a342c;white-space:pre"><span style="color:#1a9aa8">print</span>(recv_data[<span style="color:#d03020">0</span>].decode(<span style="color:#d03020">'utf8'</span>))</div>
<div class="t" style="left:7px;top:350.3px;font-family:'Liberation Mono','Noto Sans CJK SC',monospace;font-size:15.100px;line-height:18px;color:#3a342c;white-space:pre"><span style="color:#2b35c8;font-weight:bold"># 5. <span style="letter-spacing:3px;font-weight:normal">关闭套接字</span></span></div>
<div class="t" style="left:7px;top:369.9px;font-family:'Liberation Mono','Noto Sans CJK SC',monospace;font-size:15.100px;line-height:18px;color:#3a342c;white-space:pre">udp_socket.close()</div>
<div class="t" style="left:7px;top:389.4px;font-family:'Liberation Mono','Noto Sans CJK SC',monospace;font-size:15.100px;line-height:18px;color:#3a342c;white-space:pre"><span style="color:#2b35c8;font-weight:bold">~</span></div>
<div class="t" style="left:7px;top:409.0px;font-family:'Liberation Mono','Noto Sans CJK SC',monospace;font-size:15.100px;line-height:18px;color:#3a342c;white-space:pre"><span style="color:#2b35c8;font-weight:bold">~</span></div>
<div class="t" style="left:7px;top:428.5px;font-family:'Liberation Mono','Noto Sans CJK SC',monospace;font-size:15.100px;line-height:18px;color:#3a342c;white-space:pre">"socket_udp_server.py" 23L, 588C</div>
<div class="t" style="left:768px;top:428.5px;font-family:'Liberation Mono',monospace;font-size:15.100px;line-height:18px;color:#3a342c">14,0-1</div>
</div>
<div class="abs" style="left:275.700px;top:447.800px;width:87.300px;height:43.700px;border:3px solid #f0683a;border-radius:4px"></div>
<svg style="left:0;top:0" width="1225" height="689" viewBox="0 0 1225 689"><path d="M442 441L388 456" stroke="#f0482a" stroke-width="5" fill="none"/><path d="M370 463L392 448L395 463Z" fill="#f0482a"/></svg>
<div class="abs" style="left:875px;top:321px;font-size:20.400px;line-height:24.700px;color:#0a0a0a;white-space:nowrap">
<div>在31.190服务器端运行起来</div><div>#python socket_udp_server.py</div><div>&amp;</div><div>&nbsp;</div><div>确认端口是否开启要用如下命令</div><div>#netstat  -ntupl</div></div></div></div>
<div class="t" style="left:1px;top:648.9px;font-size:17px;color:#b2b2b2;font-family:'DejaVu Sans','Liberation Sans',sans-serif;line-height:20px">18</div>
<div class="abs" style="left:28.700px;top:648.6px;width:347.600px;height:195.6px;background:#cfcfcf"></div>
<div class="abs" style="left:30.700px;top:650.4px;width:343.800px;height:192.500px;overflow:hidden;background:#d8d8d8"><div class="slide th" style="left:0;top:0;transform:scale(0.2806);transform-origin:0 0"><div class="abs" style="left:21.500px;top:15.500px;width:6.500px;height:655px;background:#000"></div>
<div class="abs" style="left:21.500px;top:15.500px;width:53.200px;height:9px;background:#000"></div>
<div class="abs" style="left:510.900px;top:15.500px;width:694.100px;height:9px;background:#000"></div>
<div class="abs" style="left:1198.500px;top:15.500px;width:6.500px;height:655px;background:#000"></div>
<div class="abs" style="left:21.500px;top:661.500px;width:1183.500px;height:9px;background:#000"></div>
<div class="t ttl" style="left:189.5px;top:5px;font-size:38px;color:#3f3f3f;letter-spacing:1.300px;line-height:44px">Socket-udp</div>
<div class="t" style="left:1053px;top:630px;font-size:31.500px;font-weight:bold;color:#a7aec0;letter-spacing:3.300px;font-family:'DejaVu Sans','Liberation Sans',sans-serif;transform:scaleX(.96);transform-origin:0 0">SPOTO</div>
<div class="t" style="left:1185px;top:624px;font-size:14px;color:#a7aec0">®</div></div></div>
</div>
<div class="abs" style="left:381.600px;top:66.5px;width:17.400px;height:656px;background:#191919"></div>
<svg style="left:384.800px;top:76.400px" width="11" height="7" viewBox="0 0 11 7"><path d="M0 6.500L5.500 0.300L11 6.500Z" fill="#4a4a4a"/></svg>
<svg style="left:384.800px;top:705px" width="11" height="7" viewBox="0 0 11 7"><path d="M0 0.500L5.500 6.700L11 0.500Z" fill="#4a4a4a"/></svg>
<div class="abs" style="left:384.500px;top:349.5px;width:11.500px;height:55px;border-radius:6px;background:#5a5a5a"></div>
<div class="abs" style="left:161.500px;top:728.5px;width:80px;height:35px;border-radius:17.500px;background:#333;border:1px solid #4c4c4c"></div>
<svg style="left:193px;top:738px" width="17" height="17" viewBox="0 0 17 17"><path d="M8.500 0.500V16.500M0.500 8.500H16.500" stroke="#c4c4c4" stroke-width="2.200"/></svg></div>
<div id="vsplit"></div>
<div id="main"><div class="abs" style="left:56px;top:12px;width:1244px;height:708px;background:#242424;border-radius:4px"></div>
<div class="abs" style="left:64.700px;top:21.200px;width:1226.200px;height:689.700px;background:#9c9c9c;box-shadow:0 0 5px rgba(0,0,0,.45)"></div>
<div class="slide" style="left:65.500px;top:22px;width:1224.500px;height:688px">
<div class="abs" style="left:21.500px;top:15.500px;width:6.500px;height:655px;background:#000"></div>
<div class="abs" style="left:21.500px;top:15.500px;width:53.200px;height:9px;background:#000"></div>
<div class="abs" style="left:510.900px;top:15.500px;width:694.100px;height:9px;background:#000"></div>
<div class="abs" style="left:1198.500px;top:15.500px;width:6.500px;height:655px;background:#000"></div>
<div class="abs" style="left:21.500px;top:661.500px;width:1183.500px;height:9px;background:#000"></div>
<div class="t ttl" style="left:191.4px;top:5px;font-size:38px;color:#3f3f3f;letter-spacing:1.300px;line-height:44px">Socket-tcp</div>
<div class="t" style="left:1053px;top:630px;font-size:31.500px;font-weight:bold;color:#a7aec0;letter-spacing:3.300px;font-family:'DejaVu Sans','Liberation Sans',sans-serif;transform:scaleX(.96);transform-origin:0 0">SPOTO</div>
<div class="t" style="left:1185px;top:624px;font-size:14px;color:#a7aec0">®</div>
<div class="abs body" style="left:91.800px;top:73.300px;width:1100px;font-size:20.400px;line-height:24.500px;color:#0a0a0a;white-space:nowrap;text-spacing-trim:space-all">
<div><span style="color:#f3200c;font-weight:500;-webkit-text-stroke:.3px #f3200c">编码</span>是指信息从一种形式或格式转换为另一种形式或格式的过程。就是将人能够读懂的信息（通常称为明文）转换为计算</div>
<div>机能够读懂的信息。众所周知，计算机能够读懂的是高低电平，也就是二进制位（0，1组合）。</div>
<div><span style="color:#f3200c;font-weight:500;-webkit-text-stroke:.3px #f3200c">解码</span>就是指将计算机的能够读懂的信息转换为人能够读懂的信息。</div>
<div><span style="color:#f3200c;font-weight:500;-webkit-text-stroke:.3px #f3200c"><span style="-webkit-text-stroke:.55px #f3200c;letter-spacing:.75px">Python3</span>编码转换</span></div>
<div>字符串通过编码成为字节码，字节码通过解码成为字符串。</div>
<div style="position:relative"><span style="letter-spacing:1.500px">1、</span><span style="letter-spacing:.800px">str-&gt;bytes:encode</span>编码<span style="position:absolute;left:298px;top:0"><span style="letter-spacing:1.500px">2、</span><span style="letter-spacing:.800px">bytes-&gt;str:decode</span>解码</span></div>
</div>
<div class="abs" style="left:94.400px;top:222.500px;width:653px;height:433.700px;background:linear-gradient(90deg,#e0d9c5 0,#e0d9c5 90%,#d9d2bd 95%,#cbc4af 100%);overflow:hidden">
<div class="t" style="left:-0.500px;top:3.4px;font-size:14px;color:#9a9485;font-family:'Liberation Mono',monospace;line-height:18px">[</div>
<div class="t code" style="left:6.500px;top:0.9px">[root@192-168-31-166 tmp]# python3</div>
<div class="t code" style="left:6.500px;top:23.2px">Python 3.6.8 (default, Nov 16 2020, 16:55:22)</div>
<div class="t code" style="left:6.500px;top:45.5px">[GCC 4.8.5 20150623 (Red Hat 4.8.5-44)] on linux</div>
<div class="t code" style="left:6.500px;top:67.8px">Type "help", "copyright", "credits" or "license" for mo</div>
<div class="t" style="left:-0.500px;top:92.6px;font-size:14px;color:#9a9485;font-family:'Liberation Mono',monospace;line-height:18px">[</div>
<div class="t code" style="left:6.500px;top:90.1px">&gt;&gt;&gt; text='<span style="letter-spacing:3.200px;margin-left:-0.500px">我门</span>'</div>
<div class="t" style="left:-0.500px;top:114.9px;font-size:14px;color:#9a9485;font-family:'Liberation Mono',monospace;line-height:18px">[</div>
<div class="t code" style="left:6.500px;top:112.4px">&gt;&gt;&gt; text</div>
<div class="t code" style="left:6.500px;top:134.7px">'<span style="letter-spacing:3.200px;margin-left:-0.500px">我门</span>'</div>
<div class="t" style="left:-0.500px;top:159.5px;font-size:14px;color:#9a9485;font-family:'Liberation Mono',monospace;line-height:18px">[</div>
<div class="t code" style="left:6.500px;top:157.0px">&gt;&gt;&gt; print(text)</div>
<div class="t code" style="left:6.500px;top:179.3px"><span style="letter-spacing:3.200px;margin-left:-0.500px">我门</span></div>
<div class="t" style="left:-0.500px;top:204.1px;font-size:14px;color:#9a9485;font-family:'Liberation Mono',monospace;line-height:18px">[</div>
<div class="t code" style="left:6.500px;top:201.6px">&gt;&gt;&gt; btext=text.encode()</div>
<div class="t" style="left:-0.500px;top:226.4px;font-size:14px;color:#9a9485;font-family:'Liberation Mono',monospace;line-height:18px">[</div>
<div class="t code" style="left:6.500px;top:223.9px">&gt;&gt;&gt; btext</div>
<div class="t code" style="left:6.500px;top:246.2px">b'\xe6\x88\x91\xe9\x97\xa8'</div>
<div class="t" style="left:-0.500px;top:271.0px;font-size:14px;color:#9a9485;font-family:'Liberation Mono',monospace;line-height:18px">[</div>
<div class="t code" style="left:6.500px;top:268.5px">&gt;&gt;&gt; type(text)</div>
<div class="t code" style="left:6.500px;top:290.8px">&lt;class 'str'&gt;</div>
<div class="t" style="left:-0.500px;top:315.6px;font-size:14px;color:#9a9485;font-family:'Liberation Mono',monospace;line-height:18px">[</div>
<div class="t code" style="left:6.500px;top:313.1px">&gt;&gt;&gt; type(btext)</div>
<div class="t code" style="left:6.500px;top:335.4px">&lt;class 'bytes'&gt;</div>
<div class="t" style="left:-0.500px;top:360.2px;font-size:14px;color:#9a9485;font-family:'Liberation Mono',monospace;line-height:18px">[</div>
<div class="t code" style="left:6.500px;top:357.7px">&gt;&gt;&gt; textd=btext.decode()</div>
<div class="t" style="left:-0.500px;top:382.5px;font-size:14px;color:#9a9485;font-family:'Liberation Mono',monospace;line-height:18px">[</div>
<div class="t code" style="left:6.500px;top:380.0px">&gt;&gt;&gt; textd</div>
<div class="t code" style="left:6.500px;top:402.3px">'<span style="letter-spacing:3.200px;margin-left:-0.500px">我门</span>'</div>
<div class="t" style="left:-0.500px;top:427.1px;font-size:14px;color:#9a9485;font-family:'Liberation Mono',monospace;line-height:18px">[</div>
<div class="t code" style="left:6.500px;top:424.6px">&gt;&gt;&gt; exit()</div>
</div>
<div class="abs" style="left:402.600px;top:223.300px;width:106.500px;height:21.200px;border:2.600px solid #f4544a;border-radius:6px;border-width:2px"></div>
<div class="abs" style="left:136.500px;top:417.400px;width:241.400px;height:31px;border:2.600px solid #f4544a;border-radius:6px"></div>
<div class="abs" style="left:138.400px;top:576.300px;width:253.300px;height:28.400px;border:2.600px solid #f4544a;border-radius:6px"></div>
<div class="t" style="left:417px;top:403.500px;font-size:21.400px;color:#f2604c;line-height:24px">编码</div>
<div class="t" style="left:428px;top:572.500px;font-size:21.400px;color:#f2604c;line-height:24px">解码</div>
<div class="abs wm" style="left:246px;top:255px;width:300px;height:52px;opacity:.6;color:#f0884e">
<div class="t" style="left:-3px;top:-3.400px;font-size:60px;font-weight:bold;font-style:italic;line-height:63px;-webkit-text-stroke:2.600px #f0884e;letter-spacing:1px;transform:skewX(-10deg) scaleX(.72);transform-origin:0 100%">EngCN</div>
<div class="t" style="left:138px;top:0px;font-size:26.500px;font-weight:bold;line-height:28px;transform:skewX(-14deg);letter-spacing:-.2px">工程师论坛网</div>
<div class="abs" style="left:126px;top:27.500px;width:164px;height:21.500px;background:#f0884e;transform:skewX(-18deg)"></div>
<div class="t" style="left:131px;top:29px;font-size:18px;font-weight:bold;font-style:italic;color:#fdf1e8;line-height:19px;letter-spacing:.3px">www.EngCN.com</div>
</div>
<svg style="left:83.500px;top:67px" width="1100" height="234" viewBox="0 0 1100 234"><rect x="0.500" y="0.500" width="1098" height="232" fill="none" stroke="#7c7c7c" stroke-width="1" stroke-dasharray="3 3"/></svg>
<div class="abs" style="left:632px;top:50px;width:1px;height:18px;background:#8f8f8f"></div>
<svg style="left:624.800px;top:34.600px" width="17" height="17" viewBox="0 0 17 17"><circle cx="8.500" cy="8.500" r="8.100" fill="#8c8c8c"/><path d="M12.200 8.500a3.700 3.700 0 1 1-1.600-3" fill="none" stroke="#fff" stroke-width="1.600"/><path d="M12.800 5.500l-0.300 3.600l-3-1.700z" fill="#fff"/></svg>
<div class="abs" style="left:77.3px;top:61.2px;width:13px;height:13px;border-radius:50%;background:#fff;border:1.400px solid #757575"></div>
<div class="abs" style="left:626.0px;top:61.2px;width:13px;height:13px;border-radius:50%;background:#fff;border:1.400px solid #757575"></div>
<div class="abs" style="left:1175.5px;top:61.2px;width:13px;height:13px;border-radius:50%;background:#fff;border:1.400px solid #757575"></div>
<div class="abs" style="left:77.3px;top:177.0px;width:13px;height:13px;border-radius:50%;background:#fff;border:1.400px solid #757575"></div>
<div class="abs" style="left:1175.5px;top:177.0px;width:13px;height:13px;border-radius:50%;background:#fff;border:1.400px solid #757575"></div>
<div class="abs" style="left:77.3px;top:293.1px;width:13px;height:13px;border-radius:50%;background:#fff;border:1.400px solid #757575"></div>
<div class="abs" style="left:626.0px;top:293.1px;width:13px;height:13px;border-radius:50%;background:#fff;border:1.400px solid #757575"></div>
<div class="abs" style="left:1175.5px;top:293.1px;width:13px;height:13px;border-radius:50%;background:#fff;border:1.400px solid #757575"></div>
<svg style="left:692px;top:96.800px" width="10" height="22" viewBox="0 0 10 22"><path d="M1 1C3.200 1 5 1.800 5 3.500V18.500C5 20.200 3.200 21 1 21M9 1C6.800 1 5 1.800 5 3.500M5 18.500C5 20.200 6.800 21 9 21M3 11H7" fill="none" stroke="#fff" stroke-width="2.600" stroke-opacity=".7"/><path d="M1 1C3.200 1 5 1.800 5 3.500V18.500C5 20.200 3.200 21 1 21M9 1C6.800 1 5 1.800 5 3.500M5 18.500C5 20.200 6.800 21 9 21M3 11H7" fill="none" stroke="#111" stroke-width="1.200"/></svg>
</div>
<div class="abs" style="left:64.700px;top:21.200px;width:1226px;height:689.500px;border-left:1.800px solid #8c8c8c;border-top:1.800px solid #8c8c8c;border-right:1px solid #aaa;border-bottom:1px solid #aaa"></div>
<svg style="left:1278px;top:97.500px" width="18" height="18" viewBox="0 0 18 18"><circle cx="9" cy="9" r="8.700" fill="#5f8bdc"/><circle cx="9" cy="9" r="8.300" fill="none" stroke="#98b5ea" stroke-width="1.200"/><path d="M4.500 9H13.500" stroke="#fff" stroke-width="2.200"/></svg>
<div class="abs" style="left:1266.2px;top:130.5px;width:40.600px;height:40.500px;border-radius:3px;background:#2c2d2f;box-shadow:0 1px 4px rgba(0,0,0,.55)"><svg style="left:0;top:0" width="41" height="41" viewBox="0 0 41 41" stroke-linecap="round" stroke-linejoin="round"><path d="M27.500 10.500c1.500-1.500 3.800 0.500 2.500 2.200L21 22l-3-3z" fill="none" stroke="#d0d0d0" stroke-width="1.500"/><path d="M17.500 19.500l3 3c-1 3.500-5 5.500-10.500 4.500c2.500-1.500 2-3 3.500-5.500c1-1.500 2.500-2 4-2z" fill="none" stroke="#e8916a" stroke-width="1.500"/></svg></div>
<div class="abs" style="left:1266.2px;top:187.0px;width:40.600px;height:40.500px;border-radius:3px;background:#2c2d2f;box-shadow:0 1px 4px rgba(0,0,0,.55)"><svg style="left:0;top:0" width="41" height="41" viewBox="0 0 41 41" stroke-linecap="round" stroke-linejoin="round"><path d="M20.500 9L30.500 18.500L22 26.500H17L11.500 21.500V18.500Z" fill="none" stroke="#d0d0d0" stroke-width="1.400"/><path d="M10 15.500H19" stroke="#d0d0d0" stroke-width="1.300"/><rect x="10" y="24.500" width="21.500" height="5" rx="2.500" fill="#1690b8" stroke="#fff" stroke-width="1.200"/></svg></div>
<div class="abs" style="left:1266.2px;top:243.0px;width:40.600px;height:40.500px;border-radius:3px;background:#2c2d2f;box-shadow:0 1px 4px rgba(0,0,0,.55)"><svg style="left:0;top:0" width="41" height="41" viewBox="0 0 41 41" stroke-linecap="round" stroke-linejoin="round"><rect x="11.500" y="12.500" width="19" height="16" rx="1" fill="none" stroke="#d0d0d0" stroke-width="1.300"/><rect x="14.500" y="15.500" width="13" height="13" fill="none" stroke="#d0d0d0" stroke-width="1.100"/><rect x="10" y="24.500" width="21.500" height="5" rx="2.500" fill="#1690b8" stroke="#fff" stroke-width="1.200"/></svg></div>
<div class="abs" style="left:1266.2px;top:299.0px;width:40.600px;height:40.500px;border-radius:3px;background:#2c2d2f;box-shadow:0 1px 4px rgba(0,0,0,.55)"><svg style="left:0;top:0" width="41" height="41" viewBox="0 0 41 41" stroke-linecap="round" stroke-linejoin="round"><path d="M20.500 9.500L31 15L20.500 20.500L10 15Z" fill="none" stroke="#e8916a" stroke-width="1.500"/><path d="M10 20.500L20.500 26L31 20.500M10 25.500L20.500 31L31 25.500" fill="none" stroke="#d0d0d0" stroke-width="1.500"/></svg></div>
<div class="abs" style="left:1266.2px;top:355.0px;width:40.600px;height:40.500px;border-radius:3px;background:#2c2d2f;box-shadow:0 1px 4px rgba(0,0,0,.55)"><svg style="left:0;top:0" width="41" height="41" viewBox="0 0 41 41" stroke-linecap="round" stroke-linejoin="round"><text x="9.500" y="26" font-size="17" fill="#d0d0d0" stroke="none" font-family="Noto Sans CJK SC, sans-serif" font-weight="300">字</text><rect x="22" y="20" width="11" height="10" fill="#2c2d2f" stroke="none"/><path d="M23 22.500h8.500l-2.500-2.500M31.500 26h-8.500l2.500 2.500" fill="none" stroke="#e8916a" stroke-width="1.400"/></svg></div>
<div class="abs" style="left:1266.2px;top:411.3px;width:40.600px;height:40.500px;border-radius:3px;background:#2c2d2f;box-shadow:0 1px 4px rgba(0,0,0,.55)"><svg style="left:0;top:0" width="41" height="41" viewBox="0 0 41 41" stroke-linecap="round" stroke-linejoin="round"><rect x="10.500" y="11.500" width="20" height="18" rx="2" fill="none" stroke="#e8916a" stroke-width="1.500" stroke-dasharray="4.500 2.500"/><path d="M14 23l3.300-8l3.300 8M15.200 20.500h4.200" fill="none" stroke="#d0d0d0" stroke-width="1.400"/><path d="M23 16.500h4.500M23 20h4.500M14 26h13.500" stroke="#d0d0d0" stroke-width="1.300"/></svg></div>
<div class="abs" style="left:1266.2px;top:467.5px;width:40.600px;height:40.500px;border-radius:3px;background:#2c2d2f;box-shadow:0 1px 4px rgba(0,0,0,.55)"><svg style="left:0;top:0" width="41" height="41" viewBox="0 0 41 41" stroke-linecap="round" stroke-linejoin="round"><rect x="10.500" y="11" width="6.500" height="6.500" rx="1" fill="none" stroke="#d0d0d0" stroke-width="1.400"/><rect x="20" y="11" width="6.500" height="6.500" rx="1" fill="none" stroke="#d0d0d0" stroke-width="1.400"/><rect x="10.500" y="20.500" width="6.500" height="6.500" rx="1" fill="none" stroke="#d0d0d0" stroke-width="1.400"/><path d="M25.500 16.500l6.500 3.700v7.600l-6.500 3.700l-6.500-3.700v-7.600z" fill="#2b2b2b" stroke="#e8916a" stroke-width="1.500"/><path d="M26.500 20.500c-2 2-2.200 4.500-1 6.800c1.800-2 2-4.500 1-6.800zM23 24c0 1.800 1 3 2.500 3.300" fill="none" stroke="#e8916a" stroke-width="1.100"/></svg></div></div>
<div id="notes"><div class="t" style="left:11px;top:5.800px;font-size:14.300px;color:#c4c4c4;line-height:16px">单击此处添加备注</div></div>
<div id="status"><div class="t" style="left:4px;top:9px;font-size:17.300px;color:#c9c9c9;line-height:20px">幻灯片 <span style="font-family:'DejaVu Sans','Liberation Sans',sans-serif;font-size:17px;word-spacing:2px;letter-spacing:.2px">15 / 33</span></div>
<div class="t" style="left:171px;top:9px;font-size:17.300px;color:#c9c9c9;line-height:20px">包图主题2</div>
<svg style="left:275px;top:7.500px" width="20" height="22" viewBox="0 0 20 22" fill="none" stroke="#c6c6c6" stroke-width="1.500" stroke-linejoin="round" stroke-linecap="round"><path d="M10 1L18.500 4.500V11.500C18.500 15.500 15.500 19 10 21C4.500 19 1.500 15.500 1.500 11.500V4.500Z"/><path d="M6.800 7.800L13.200 14.200M13.200 7.800L6.800 14.200"/></svg>
<div class="t" style="left:302px;top:9px;font-size:17.300px;color:#c9c9c9;line-height:20px">文档未保护</div>
<svg style="left:406.500px;top:9.500px" width="19" height="19" viewBox="0 0 19 19"><circle cx="9.500" cy="9.500" r="9.200" fill="#22723c"/><circle cx="9.500" cy="9.500" r="3.200" fill="#d6ecdc"/></svg>
<div class="t" style="left:433px;top:9px;font-size:17.300px;color:#c9c9c9;line-height:20px">本地备份开</div>
<svg style="left:1004px;top:8px" width="24" height="24" viewBox="0 0 24 24" fill="none" stroke="#c6c6c6" stroke-width="1.500" stroke-linejoin="round" stroke-linecap="round"><path d="M12 2L21 6.500V10M12 2L3 6.500V17.500L12 22L21 17.500V14"/><path d="M3.500 7L12 11.500L20.500 7M12 11.500V21.500"/></svg>
<div class="t" style="left:1037px;top:9px;font-size:18px;color:#c9c9c9;line-height:20px;letter-spacing:.3px">智能美化</div>
<svg style="left:1118px;top:18px" width="7" height="5" viewBox="0 0 7 5"><path d="M0 4.800H7L3.500 0.200Z" fill="#bdbdbd"/></svg>
<svg style="left:1152px;top:9px" width="24" height="20" viewBox="0 0 24 20" fill="none" stroke="#c6c6c6" stroke-width="1.600" stroke-linecap="round" stroke-linejoin="round"><path d="M1 3.500H9.500M1 11H22.500M1 18.500H22.500"/><path d="M13.500 2.500L17 6L22.500 1"/></svg>
<div class="abs" style="left:1188.500px;top:1px;width:33.500px;height:37px;background:#404040"></div>
<svg style="left:1195px;top:9px" width="23" height="21" viewBox="0 0 23 21" fill="none" stroke="#c6c6c6" stroke-width="1.600" stroke-linejoin="round"><rect x="1" y="1" width="21" height="19" rx="1.500"/><path d="M6.500 1V15.500H22M6.500 15.500V20"/></svg>
<svg style="left:1238px;top:9px" width="24" height="21" viewBox="0 0 24 21" fill="none" stroke="#c6c6c6" stroke-width="1.600" stroke-linejoin="round"><rect x="1" y="1" width="8.500" height="7" rx="1"/><rect x="14" y="1" width="8.500" height="7" rx="1"/><rect x="1" y="13" width="8.500" height="7" rx="1"/><rect x="14" y="13" width="8.500" height="7" rx="1"/></svg>
<svg style="left:1281px;top:9px" width="24" height="23" viewBox="0 0 24 23" fill="none" stroke="#c6c6c6" stroke-width="1.600" stroke-linejoin="round" stroke-linecap="round"><path d="M1.500 2H8.500C10.500 2 12 3 12 5V21C12 19.500 10.500 18.500 8.500 18.500H1.500Z"/><path d="M22.500 2H15.500C13.500 2 12 3 12 5V21C12 19.500 13.500 18.500 15.500 18.500H22.500Z"/></svg>
<svg style="left:1325px;top:7px" width="24" height="24" viewBox="0 0 24 24" fill="none" stroke="#c6c6c6" stroke-width="1.600" stroke-linejoin="round" stroke-linecap="round"><path d="M4 8V5.500C4 3.500 5.500 2 7.500 2H10.500C12.500 2 14 3.500 14 5.500V8"/><path d="M8 8.500V5.500"/><rect x="1.500" y="8.500" width="15.500" height="13" rx="2"/><path d="M17 13.500L22.500 10.500V20L17 17"/></svg>
<svg style="left:1369px;top:6px" width="25" height="25" viewBox="0 0 25 25"><circle cx="12.500" cy="12.500" r="12" fill="#f57a18"/><path d="M9.500 6.500L18.500 12.500L9.500 18.500Z" fill="#fff"/></svg>
<div class="abs" style="left:1422px;top:16px;width:16px;height:2px;background:#6a6a6a"></div>
<div class="abs" style="left:1449px;top:15.500px;width:184px;height:2px;background:#565656"></div>
<div class="abs" style="left:1520.500px;top:6.500px;width:20px;height:20px;border-radius:50%;background:#8a8a8a;border:1px solid #a0a0a0"></div>
<svg style="left:1644px;top:8px" width="18" height="18" viewBox="0 0 18 18"><path d="M9 0.500V17.500M0.500 9H17.500" stroke="#bdbdbd" stroke-width="2"/></svg>
<div class="t" style="left:1704px;top:9px;font-size:17px;color:#c0c0c0;line-height:20px;font-family:'DejaVu Sans','Liberation Sans',sans-serif;letter-spacing:1px">88 %</div></div>
</body>
</html>
